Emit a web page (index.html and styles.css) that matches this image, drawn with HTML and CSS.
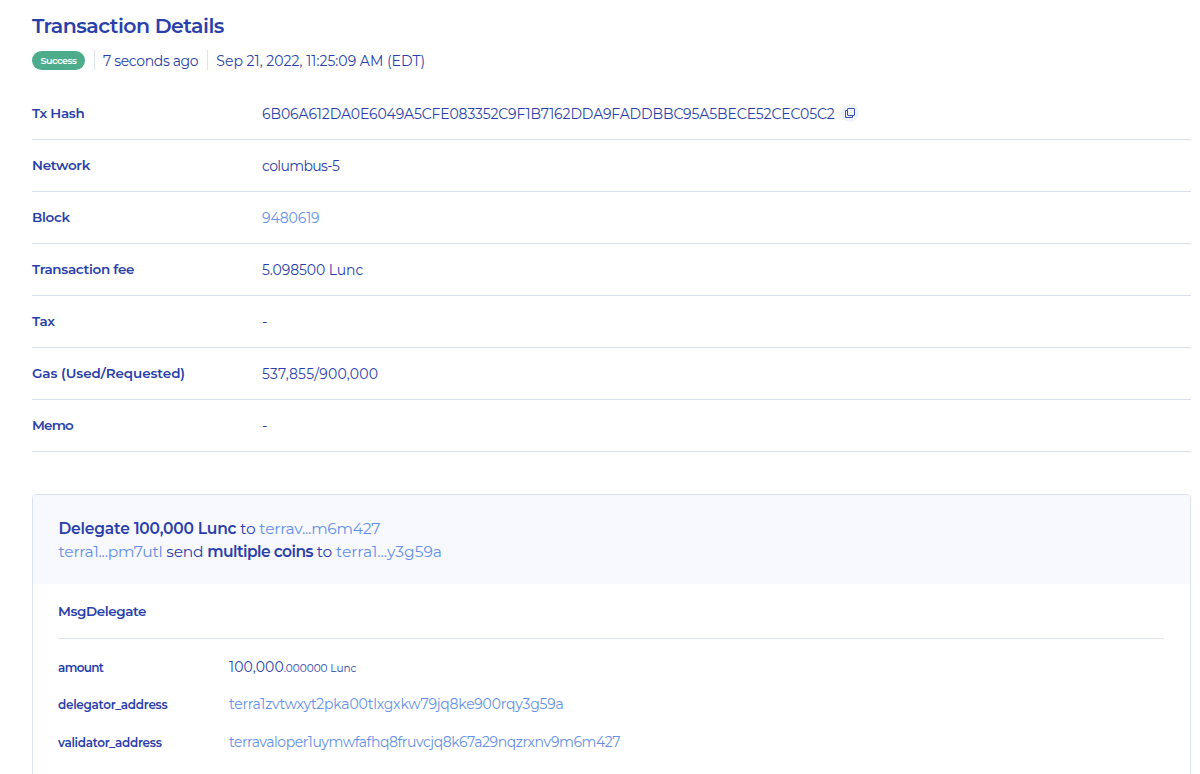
FILE: index.html
```html
<!DOCTYPE html>
<html lang="en">
<head>
  <meta charset="UTF-8" />
  <meta name="viewport" content="width=device-width, initial-scale=1.0"/>
  <title>Transaction Details</title>
  <link rel="stylesheet" href="styles.css">
</head>
<body>
  <main class="page">
    <h1 class="title">Transaction Details</h1>
    <div class="meta">
      <span class="badge">Success</span>
      <span class="meta-item ago">7 seconds ago</span>
      <span class="meta-item date">Sep 21, 2022, 11:25:09 AM (EDT)</span>
    </div>

    <div class="list">
      <div class="row">
        <div class="head">Tx Hash</div>
        <div class="body">
          <span class="hash">6B06A612DA0E6049A5CFE083352C9F1B7162DDA9FADDBBC95A5BECE52CEC05C2</span>
          <button class="copy" aria-label="Copy">
            <svg width="12" height="12" viewBox="0 0 12 12" fill="none" stroke="#3a50b4" stroke-width="1">
              <rect x="3.5" y="1.5" width="7" height="7" rx="0.5"/>
              <path d="M3.5 3.5h-2v7h7v-2"/>
            </svg>
          </button>
        </div>
      </div>
      <div class="row">
        <div class="head">Network</div>
        <div class="body"><span class="network">columbus-5</span></div>
      </div>
      <div class="row">
        <div class="head">Block</div>
        <div class="body"><a class="block">9480619</a></div>
      </div>
      <div class="row">
        <div class="head">Transaction fee</div>
        <div class="body"><span class="fee">5.098500 Lunc</span></div>
      </div>
      <div class="row">
        <div class="head">Tax</div>
        <div class="body">-</div>
      </div>
      <div class="row">
        <div class="head head-gas">Gas (Used/Requested)</div>
        <div class="body"><span class="gas">537,855/900,000</span></div>
      </div>
      <div class="row">
        <div class="head head-memo">Memo</div>
        <div class="body">-</div>
      </div>
    </div>

    <section class="card">
      <div class="card-header">
        <p><b class="delegate">Delegate 100,000 Lunc</b> to <a class="validator">terrav...m6m427</a></p>
        <p><a class="sender">terra1...pm7utl</a> send <b class="coins">multiple coins</b> to <a class="receiver">terra1...y3g59a</a></p>
      </div>
      <div class="card-body">
        <h2 class="action">MsgDelegate</h2>
        <div class="detail">
          <div class="key key-amount">amount</div>
          <div class="value"><span class="amount">100,000</span><small>.000000 Lunc</small></div>
        </div>
        <div class="detail">
          <div class="key">delegator_address</div>
          <div class="value"><a class="delegator">terra1zvtwxyt2pka00tlxgxkw79jq8ke900rqy3g59a</a></div>
        </div>
        <div class="detail">
          <div class="key">validator_address</div>
          <div class="value"><a class="valoper">terravaloper1uymwfafhq8fruvcjq8k67a29nqzrxnv9m6m427</a></div>
        </div>
      </div>
    </section>
  </main>
</body>
</html>
```
FILE: styles.css
```css
* {
  box-sizing: border-box;
  margin: 0;
  padding: 0;
}

body {
  overflow: hidden;
  font-family: Gotham, Montserrat, Inter, sans-serif;
  font-size: 14px;
  background: #fff;
  color: #2a3fab;
}

a {
  color: #6490e8;
  text-decoration: none;
  cursor: pointer;
}

b {
  font-weight: 600;
}

.page {
  height: 774px;
  padding: 13px 9px 0 32px;
  overflow: hidden;
  white-space: nowrap;
}

.title {
  font-size: 20.5px;
  line-height: 26px;
  font-weight: 600;
  letter-spacing: -0.52px;
}

.meta {
  display: flex;
  align-items: center;
  height: 20px;
  margin-top: 11px;
}

.badge {
  width: 53px;
  height: 19px;
  border-radius: 10px;
  background: #4cac8c;
  color: #fff;
  font-size: 9.5px;
  font-weight: 600;
  line-height: 19px;
  letter-spacing: -0.4px;
  text-align: center;
}

.meta-item {
  height: 20px;
  margin-left: 9px;
  padding-left: 8px;
  border-left: 1px solid #dfe3f3;
  line-height: 22px;
}

.ago {
  letter-spacing: -0.35px;
}

.date {
  letter-spacing: 0.02px;
}

.list {
  margin-top: 18px;
}

.row {
  display: flex;
  align-items: center;
  height: 52px;
  border-bottom: 1px solid #d9dfec;
}

.head {
  width: 230px;
  padding-bottom: 1px;
  font-size: 13.5px;
  font-weight: 600;
  letter-spacing: -0.3px;
}

.head-gas {
  letter-spacing: -0.06px;
}

.head-memo {
  letter-spacing: -0.8px;
}

.body {
  display: flex;
  align-items: center;
}

.hash,
.block,
.fee {
  letter-spacing: -0.1px;
}

.network {
  letter-spacing: -0.62px;
}

.gas {
  letter-spacing: 0.2px;
}

.copy {
  display: flex;
  align-items: center;
  justify-content: center;
  width: 18px;
  height: 18px;
  margin: 0 0 2px 6px;
  border: 0;
  border-radius: 50%;
  background: #edf2fd;
  cursor: pointer;
}

.card {
  height: 320px;
  margin-top: 42px;
  border: 1px solid #dde2f2;
  border-radius: 4px;
}

.card-header {
  height: 89px;
  padding: 22px 25.5px;
  border-radius: 3px 3px 0 0;
  background: #f8f9fe;
  font-size: 15.5px;
  line-height: 23px;
  letter-spacing: -0.22px;
}

.delegate {
  letter-spacing: -0.2px;
}

.sender {
  letter-spacing: -0.23px;
}

.coins {
  letter-spacing: -0.55px;
}

.receiver {
  letter-spacing: -0.02px;
}

.card-body {
  padding: 0 26px 0 25px;
}

.action {
  height: 55px;
  margin-bottom: 9px;
  border-bottom: 1px solid #dfe3f1;
  font-size: 13.5px;
  font-weight: 600;
  line-height: 54px;
  letter-spacing: -0.4px;
}

.detail {
  display: flex;
  align-items: center;
  height: 37.5px;
}

.key {
  width: 171px;
  padding-top: 1px;
  font-size: 12px;
  font-weight: 600;
  letter-spacing: -0.28px;
}

.key-amount {
  letter-spacing: -0.65px;
}

.amount {
  letter-spacing: 0.1px;
}

.delegator {
  letter-spacing: -0.21px;
}

.valoper {
  letter-spacing: -0.44px;
}

small {
  font-size: 10.5px;
}
```
